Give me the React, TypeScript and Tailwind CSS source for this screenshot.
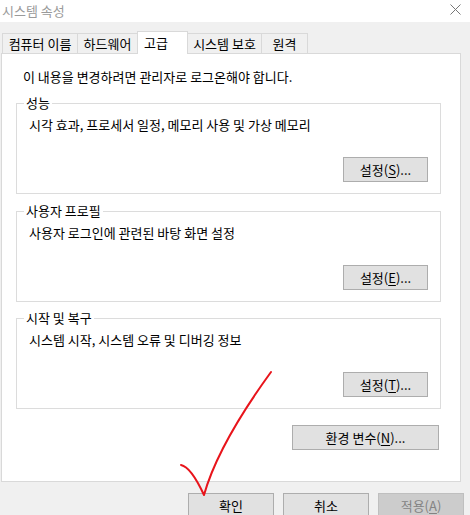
import { ReactNode } from "react";

const FONT = "font-['Malgun_Gothic','Noto_Sans_CJK_KR',sans-serif]";

type TabProps = { label: string; width: string; selected?: boolean; last?: boolean };

function Tab({ label, width, selected, last }: TabProps) {
  if (selected) {
    return (
      <div
        className={`${width} relative z-10 -mb-px flex h-[23px] items-center border-x border-t border-[#d9d9d9] bg-white pl-[6px]`}
      >
        {label}
      </div>
    );
  }
  return (
    <div
      className={`${width} flex h-[20px] items-center justify-center border-l border-t border-[#d9d9d9] ${
        last ? "border-r" : ""
      }`}
    >
      {label}
    </div>
  );
}

function WinButton({
  children,
  width,
  disabled,
}: {
  children: ReactNode;
  width: string;
  disabled?: boolean;
}) {
  return (
    <div
      className={`${width} flex h-[25px] items-center justify-center border ${
        disabled
          ? "border-[#bfbfbf] bg-[#cccccc] text-[#838383]"
          : "border-[#adadad] bg-[#e1e1e1] text-black"
      }`}
    >
      {children}
    </div>
  );
}

function GroupBox({
  title,
  text,
  hotkey,
  className,
}: {
  title: string;
  text: string;
  hotkey: string;
  className: string;
}) {
  return (
    <div className={`relative ml-[14px] mr-[19px] h-[91px] border border-[#dcdcdc] ${className}`}>
      <span className="absolute -top-[9px] left-[7px] bg-white px-[2px]">{title}</span>
      <div className="pl-[12px] pt-[13px]">{text}</div>
      <div className="mr-[12px] mt-[24px] flex justify-end">
        <WinButton width="w-[85px]">
          설정(<span className="underline underline-offset-2">{hotkey}</span>)...
        </WinButton>
      </div>
    </div>
  );
}

export default function App() {
  return (
    <div
      className={`relative h-[515px] w-[470px] overflow-hidden bg-[#f0f0f0] text-[13px] leading-[16px] text-black ${FONT}`}
    >
      {/* title bar */}
      <div className="flex h-[22px] items-center justify-between bg-white pl-[2px] pr-[9px]">
        <span className="text-[#9a9a9a]">시스템 속성</span>
        <svg width="11" height="11" viewBox="0 0 11 11" className="mb-[3px]">
          <path d="M0.5 0.5 L10.5 10.5 M10.5 0.5 L0.5 10.5" stroke="#777" strokeWidth="1" />
        </svg>
      </div>

      {/* tabs */}
      <div className="flex items-end pl-[2px] pt-[9px]">
        <Tab label="컴퓨터 이름" width="w-[75px]" />
        <Tab label="하드웨어" width="w-[60px]" />
        <Tab label="고급" width="w-[51px]" selected />
        <div className="flex h-[20px] w-[73px] items-center justify-center border-t border-[#d9d9d9]">
          시스템 보호
        </div>
        <Tab label="원격" width="w-[47px]" last />
      </div>

      {/* panel */}
      <div className="ml-[1px] flex h-[429px] w-[460px] flex-col border border-[#d9d9d9] bg-white">
        <div className="pl-[21px] pt-[15px]">이 내용을 변경하려면 관리자로 로그온해야 합니다.</div>
        <GroupBox
          className="mt-[18px]"
          title="성능"
          text="시각 효과, 프로세서 일정, 메모리 사용 및 가상 메모리"
          hotkey="S"
        />
        <GroupBox
          className="mt-[17px]"
          title="사용자 프로필"
          text="사용자 로그인에 관련된 바탕 화면 설정"
          hotkey="E"
        />
        <GroupBox
          className="mt-[16px]"
          title="시작 및 복구"
          text="시스템 시작, 시스템 오류 및 디버깅 정보"
          hotkey="T"
        />
        <div className="mr-[21px] mt-[16px] flex justify-end">
          <WinButton width="w-[147px]">
            환경 변수(<span className="underline underline-offset-2">N</span>)...
          </WinButton>
        </div>
      </div>

      {/* dialog buttons */}
      <div className="mr-[6px] mt-[11px] flex justify-end gap-[9px]">
        <WinButton width="w-[86px]">확인</WinButton>
        <WinButton width="w-[86px]">취소</WinButton>
        <WinButton width="w-[86px]" disabled>
          적용(<span className="underline underline-offset-2">A</span>)
        </WinButton>
      </div>

      {/* hand-drawn check mark */}
      <svg className="pointer-events-none absolute left-0 top-0" width="470" height="515">
        <path
          d="M181 465 Q191 467 204 495 Q218 445 271 372"
          fill="none"
          stroke="#e8141b"
          strokeWidth="2"
          strokeLinecap="round"
          strokeLinejoin="round"
        />
      </svg>
    </div>
  );
}
